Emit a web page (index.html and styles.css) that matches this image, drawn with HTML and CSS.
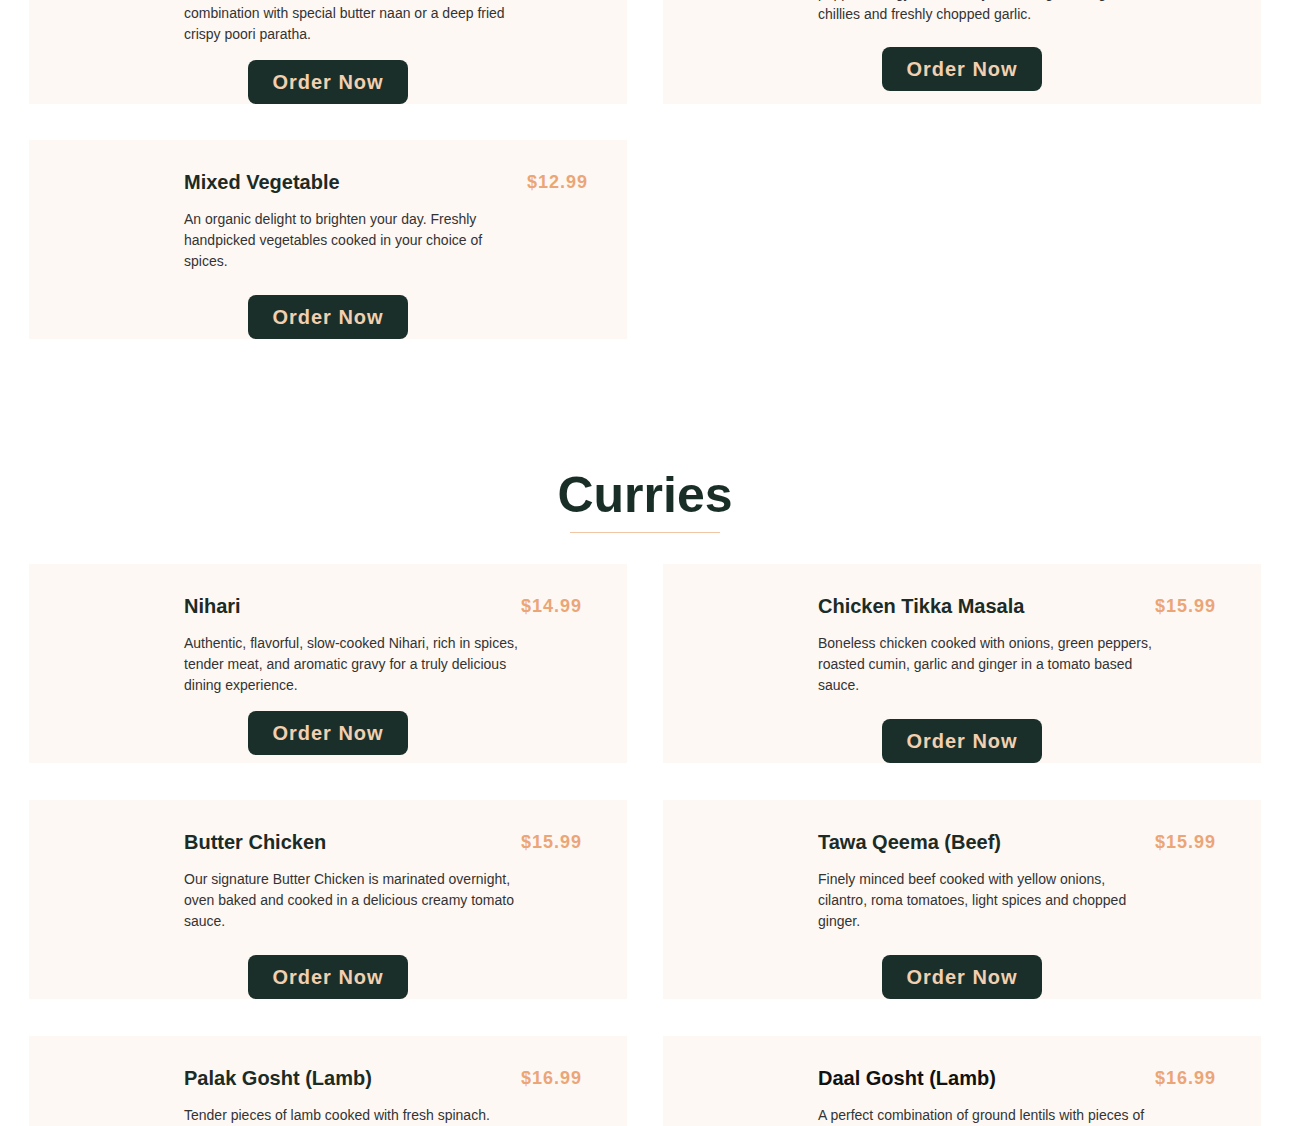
FILE: index.html
```html
<!DOCTYPE html>
<html lang="en">
<head>
<meta charset="utf-8">
<title>Menu</title>
<link rel="stylesheet" href="styles.css">
</head>
<body>
<main class="menu">
  <section class="menu-section menu-section--scrolled">
    <div class="card-grid card-grid--first">
      <article class="card">
        <div class="card-media"></div>
        <div class="card-body">
          <div class="card-head">
            <h3 class="card-title">Chana Masala</h3>
            <span class="card-price">$12.99</span>
          </div>
          <p class="card-desc">Chickpeas slow cooked in a rich and tangy onion tomato gravy, spiced to perfection. Best enjoyed in combination with special butter naan or a deep fried crispy poori paratha.</p>
          <button class="order-btn order-btn--tight">Order Now</button>
        </div>
      </article>
      <article class="card">
        <div class="card-media"></div>
        <div class="card-body">
          <div class="card-head">
            <h3 class="card-title">Chilli Paneer</h3>
            <span class="card-price">$13.99</span>
          </div>
          <p class="card-desc card-desc--low">Cubes of fresh cottage cheese tossed with onions, peppers, tangy sauces, soy and vinegar with green chillies and freshly chopped garlic.</p>
          <button class="order-btn order-btn--after-low">Order Now</button>
        </div>
      </article>
      <article class="card">
        <div class="card-media"></div>
        <div class="card-body card-body--wide">
          <div class="card-head">
            <h3 class="card-title">Mixed Vegetable</h3>
            <span class="card-price">$12.99</span>
          </div>
          <p class="card-desc">An organic delight to brighten your day. Freshly handpicked vegetables cooked in your choice of spices.</p>
          <button class="order-btn">Order Now</button>
        </div>
      </article>
    </div>
  </section>

  <section class="menu-section menu-section--spaced">
    <h2 class="section-title">Curries</h2>
    <div class="section-rule"></div>
    <div class="card-grid">
      <article class="card">
        <div class="card-media"></div>
        <div class="card-body">
          <div class="card-head">
            <h3 class="card-title">Nihari</h3>
            <span class="card-price">$14.99</span>
          </div>
          <p class="card-desc">Authentic, flavorful, slow-cooked Nihari, rich in spices, tender meat, and aromatic gravy for a truly delicious dining experience.</p>
          <button class="order-btn order-btn--tight">Order Now</button>
        </div>
      </article>
      <article class="card">
        <div class="card-media"></div>
        <div class="card-body">
          <div class="card-head">
            <h3 class="card-title">Chicken Tikka Masala</h3>
            <span class="card-price">$15.99</span>
          </div>
          <p class="card-desc">Boneless chicken cooked with onions, green peppers, roasted cumin, garlic and ginger in a tomato based sauce.</p>
          <button class="order-btn">Order Now</button>
        </div>
      </article>
      <article class="card">
        <div class="card-media"></div>
        <div class="card-body">
          <div class="card-head">
            <h3 class="card-title">Butter Chicken</h3>
            <span class="card-price">$15.99</span>
          </div>
          <p class="card-desc">Our signature Butter Chicken is marinated overnight, oven baked and cooked in a delicious creamy tomato sauce.</p>
          <button class="order-btn">Order Now</button>
        </div>
      </article>
      <article class="card">
        <div class="card-media"></div>
        <div class="card-body">
          <div class="card-head">
            <h3 class="card-title">Tawa Qeema (Beef)</h3>
            <span class="card-price">$15.99</span>
          </div>
          <p class="card-desc">Finely minced beef cooked with yellow onions, cilantro, roma tomatoes, light spices and chopped ginger.</p>
          <button class="order-btn">Order Now</button>
        </div>
      </article>
      <article class="card">
        <div class="card-media"></div>
        <div class="card-body">
          <div class="card-head">
            <h3 class="card-title">Palak Gosht (Lamb)</h3>
            <span class="card-price">$16.99</span>
          </div>
          <p class="card-desc">Tender pieces of lamb cooked with fresh spinach.</p>
          <button class="order-btn">Order Now</button>
        </div>
      </article>
      <article class="card">
        <div class="card-media"></div>
        <div class="card-body">
          <div class="card-head">
            <h3 class="card-title card-title--black">Daal Gosht (Lamb)</h3>
            <span class="card-price">$16.99</span>
          </div>
          <p class="card-desc">A perfect combination of ground lentils with pieces of tender lamb, cooked with traditional spices.</p>
          <button class="order-btn">Order Now</button>
        </div>
      </article>
    </div>
  </section>
</main>
</body>
</html>
```

FILE: styles.css
```css
* {
  box-sizing: border-box;
}

body {
  margin: 0;
  background: #ffffff;
  font-family: "Liberation Sans", Arial, sans-serif;
  color: #333333;
}

.menu {
  padding: 0 49px 0 29px;
}

.menu-section--scrolled {
  margin-top: -108px;
}

.menu-section--spaced {
  padding-top: 127px;
}

.section-title {
  margin: 0;
  text-align: center;
  font-size: 50px;
  line-height: 58px;
  font-weight: 700;
  color: #1a2e28;
}

.section-rule {
  width: 150px;
  height: 1px;
  margin: 8px auto 31px;
  background: #efc6a6;
}

.card-grid {
  display: grid;
  grid-template-columns: 1fr 1fr;
  column-gap: 36px;
  row-gap: 37px;
}

.card-grid--first {
  row-gap: 36px;
}

.card {
  display: flex;
  min-height: 198px;
  padding: 30px 0 0 30px;
  background: #fef8f4;
}

.card-media {
  flex: 0 0 110px;
  margin-right: 15px;
}

.card-body {
  flex: 1;
  display: flex;
  flex-direction: column;
  padding-right: 45px;
}

.card-body--wide {
  padding-right: 39px;
}

.card-head {
  display: flex;
  justify-content: space-between;
  align-items: center;
  height: 24px;
}

.card-title {
  margin: 0;
  font-size: 20px;
  line-height: 24px;
  font-weight: 700;
  color: #1c2b25;
}

.card-title--black {
  color: #111111;
}

.card-price {
  font-size: 18px;
  line-height: 24px;
  font-weight: 700;
  letter-spacing: 1px;
  color: #eba577;
}

.card-desc {
  margin: 15px 0 0;
  max-width: 340px;
  font-size: 14px;
  line-height: 21px;
  color: #333333;
}

.card-desc--low {
  margin-top: 16px;
}

.order-btn {
  align-self: flex-start;
  width: 160px;
  height: 44px;
  margin: 23px 0 0 64px;
  padding: 0;
  border: none;
  border-radius: 8px;
  background: #1a2f29;
  color: #f2cfb0;
  font-family: "Liberation Sans", Arial, sans-serif;
  font-size: 20px;
  font-weight: 700;
  letter-spacing: 1px;
  cursor: pointer;
}

.order-btn--tight {
  margin-top: 15px;
}

.order-btn--after-low {
  margin-top: 22px;
}
```
